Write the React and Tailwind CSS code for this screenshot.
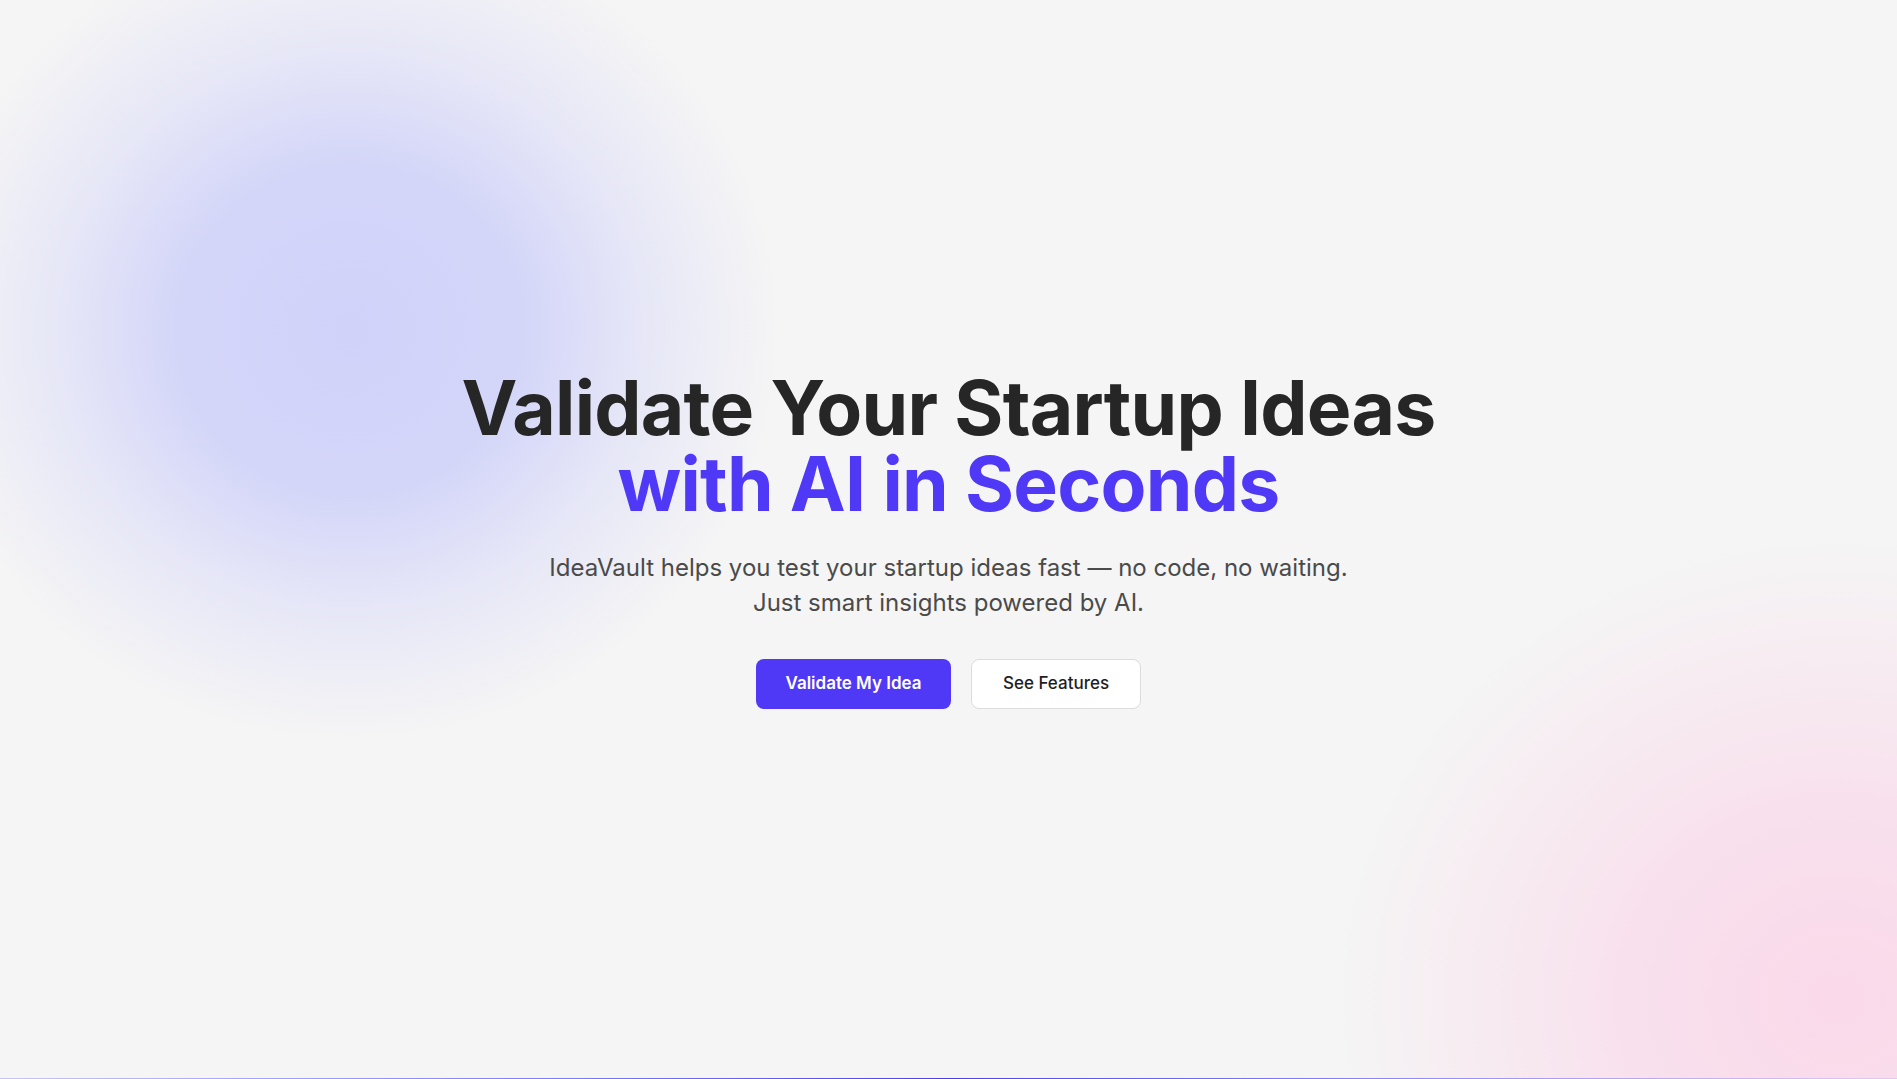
import React from "react";

const Hero = () => {
    return (
        <section className="relative min-h-screen overflow-hidden bg-[#f5f5f5] flex items-center justify-center">
            {/* background blobs */}
            <div className="absolute -left-[80px] -top-[80px] w-[860px] h-[820px] rounded-full bg-[radial-gradient(closest-side,rgba(208,210,249,1),rgba(210,212,249,0.95)_40%,rgba(222,223,248,0.65)_68%,rgba(245,245,245,0)_100%)]" />
            <div className="absolute right-[-440px] bottom-[-380px] w-[1000px] h-[920px] rounded-full bg-[radial-gradient(closest-side,rgba(250,217,234,1),rgba(249,220,235,0.85)_40%,rgba(245,245,245,0)_100%)]" />

            <div className="relative flex flex-col items-center text-center" style={{ fontFamily: "Inter, 'Noto Sans', sans-serif" }}>
                <h1 className="text-[75px] leading-[76px] font-bold tracking-[-0.01em] text-[#262626]">
                    Validate Your Startup Ideas
                    <br />
                    <span className="text-[#4f39f6]">with AI in Seconds</span>
                </h1>
                <p className="mt-[28px] text-[24px] leading-[35px] text-[#4a4a4a]">
                    IdeaVault helps you test your startup ideas fast — no code, no waiting.
                    <br />
                    Just smart insights powered by AI.
                </p>
                <div className="mt-[39px] flex gap-5">
                    <button className="h-[50px] w-[195px] rounded-lg bg-[#4f39f6] text-white text-[17px] font-semibold">
                        Validate My Idea
                    </button>
                    <button className="h-[50px] w-[170px] rounded-lg bg-white border border-[#dcdcdc] text-[#1f1f1f] text-[17px] font-medium">
                        See Features
                    </button>
                </div>
            </div>

            <div className="absolute bottom-0 left-0 right-0 h-px bg-gradient-to-r from-[#c9c3fb] via-[#4f39f6] to-[#e6c8f0]" />
        </section>
    );
};

export default function App() {
    return <Hero />;
}
